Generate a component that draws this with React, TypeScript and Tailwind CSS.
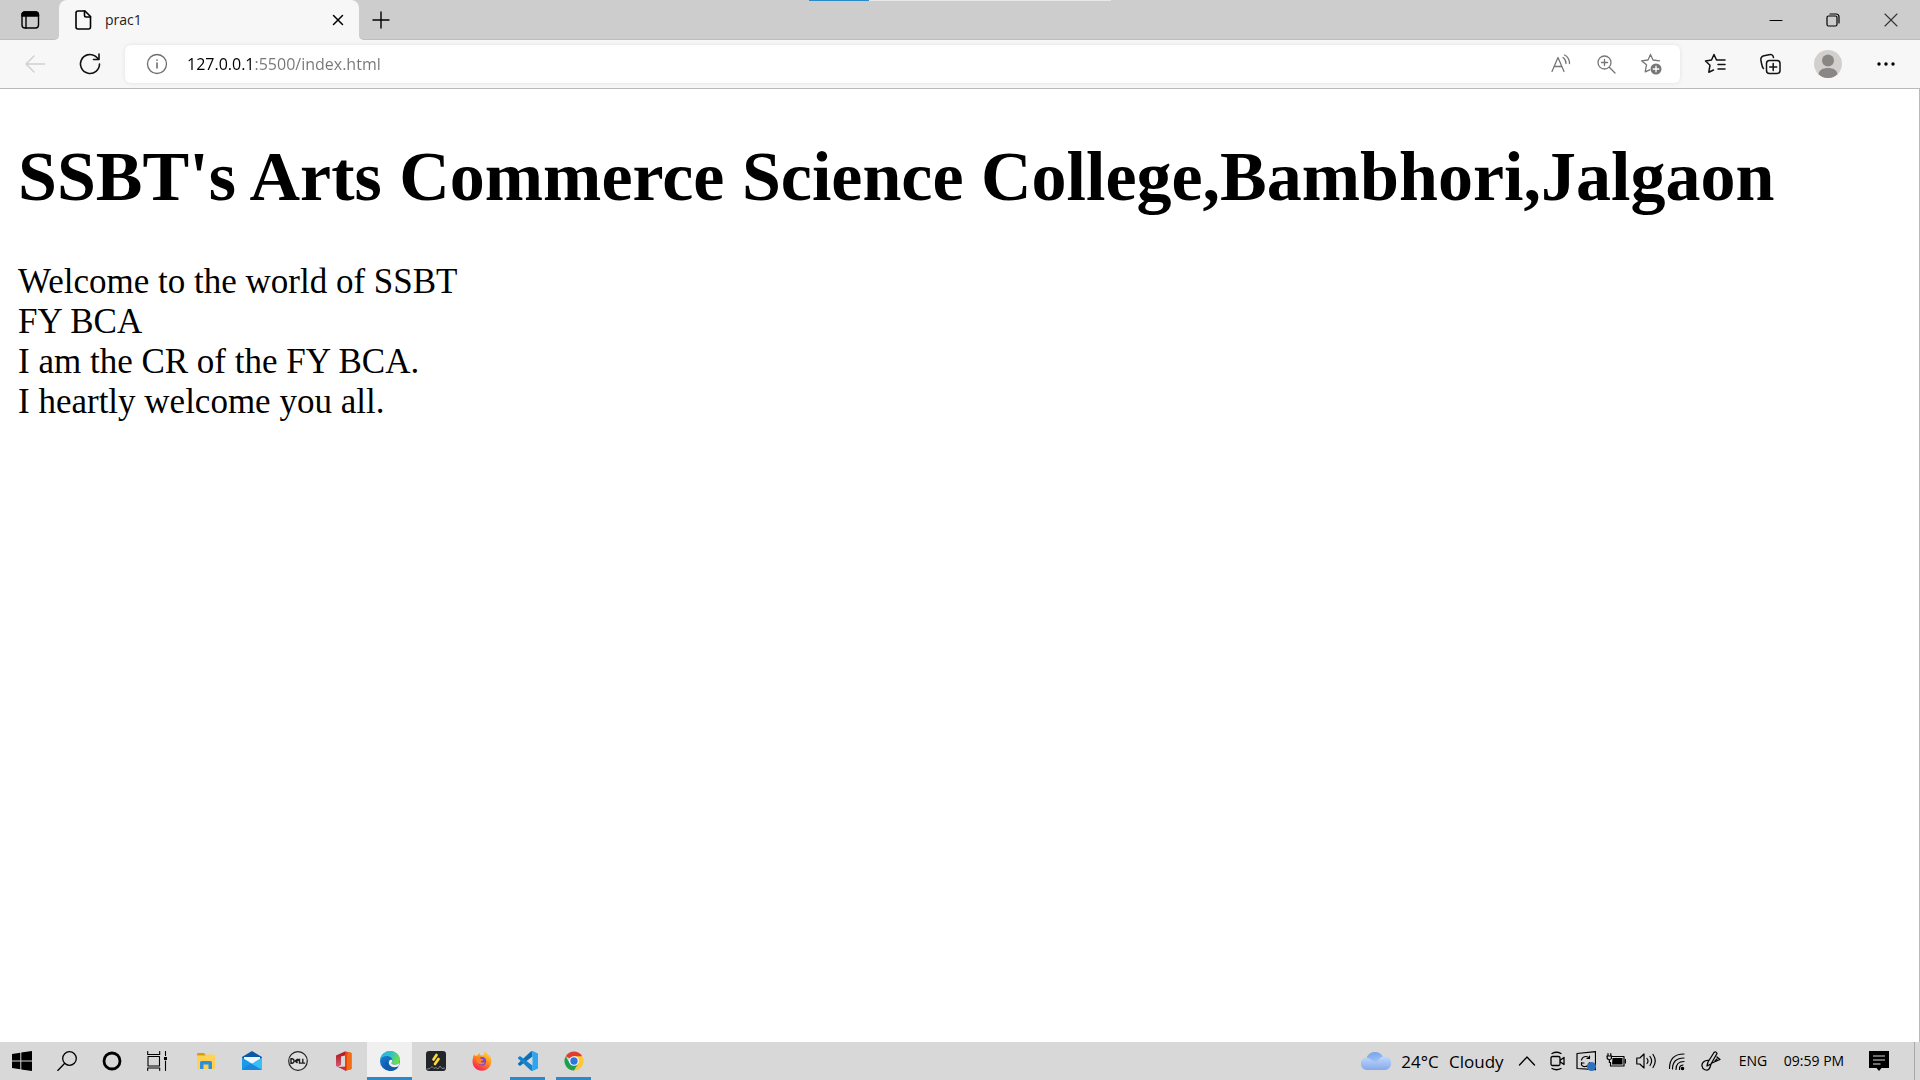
import React from "react";

type BoxProps = { label: string; className: string; children: React.ReactNode };

function IconButton({ label, className, children }: BoxProps) {
  return (
    <button type="button" aria-label={label} className={`flex shrink-0 items-center justify-center ${className}`}>
      {children}
    </button>
  );
}

type GlyphProps = { size?: number; children: React.ReactNode; className?: string; stroke?: number };

function Line({ size = 20, children, className = "", stroke = 1.3 }: GlyphProps) {
  return (
    <svg
      width={size}
      height={size}
      viewBox={`0 0 ${size} ${size}`}
      fill="none"
      stroke="currentColor"
      strokeWidth={stroke}
      strokeLinecap="round"
      strokeLinejoin="round"
      className={`shrink-0 ${className}`}
      aria-hidden="true"
    >
      {children}
    </svg>
  );
}

function TitleBar() {
  return (
    <header className="relative flex h-10 shrink-0 bg-[#f7f7f7]">
      <div className="flex w-[59px] rounded-br-[5px] border-b border-[#bebebe] bg-[#cdcdcd]">
        <IconButton label="Tab actions" className="w-full">
          <Line stroke={1.4}>
            <rect x="2" y="2" width="16.5" height="16" rx="3" />
            <path d="M2 6V5a3 3 0 0 1 3-3h10.500a3 3 0 0 1 3 3v1z" fill="currentColor" />
            <path d="M6 6v12" />
          </Line>
        </IconButton>
      </div>
      <div className="w-[300px] bg-[linear-gradient(#cdcdcd_20px,#f7f7f7_20px)]">
        <div className="flex h-full items-center rounded-t-lg bg-[#f7f7f7] pl-[14px] pr-[10px]">
          <Line stroke={1.6}>
            <path d="M5 1h7l5.500 5.500V17a2 2 0 0 1-2 2H5a2 2 0 0 1-2-2V3a2 2 0 0 1 2-2z" />
            <path d="M11.500 1v4.500a1.500 1.500 0 0 0 1.500 1.500h4.500" />
          </Line>
          <span className="grow pl-3 text-sm text-[#1b1b1b]">prac1</span>
          <IconButton label="Close tab" className="size-[22px]">
            <Line size={12} stroke={1.5}>
              <path d="M1.500 1.500l9 9M10.500 1.500l-9 9" />
            </Line>
          </IconButton>
        </div>
      </div>
      <div className="flex grow items-center rounded-bl-[5px] border-b border-[#bebebe] bg-[#cdcdcd]">
        <IconButton label="New tab" className="h-full w-11">
          <Line size={18} stroke={1.4}>
            <path d="M9 1v16M1 9h16" />
          </Line>
        </IconButton>
        <div className="grow" />
        <IconButton label="Minimize" className="h-full w-[57px]">
          <Line size={14} stroke={1}>
            <path d="M1 7.500h12" />
          </Line>
        </IconButton>
        <IconButton label="Restore" className="h-full w-[57px]">
          <Line size={14} stroke={1.2}>
            <rect x="1" y="3" width="10" height="10" rx="1.500" />
            <path d="M4 1h6a3 3 0 0 1 3 3v6" />
          </Line>
        </IconButton>
        <IconButton label="Close" className="h-full w-[59px] text-[#333]">
          <Line size={14} stroke={1.1}>
            <path d="M1 1l12 12M13 1L1 13" />
          </Line>
        </IconButton>
      </div>
      <div className="absolute left-1/2 top-0 flex h-px w-[302px] -translate-x-1/2 bg-[#e8e8e8]">
        <div className="w-[60px] bg-[#2d8ac9]" />
      </div>
    </header>
  );
}

function Toolbar() {
  return (
    <nav className="flex h-[49px] shrink-0 items-center border-b border-[#b9b9b9] bg-[#f7f7f7]">
      <IconButton label="Back" className="ml-3 h-full w-[46px] text-[#cfcfcf]">
        <Line size={22} stroke={1.4}>
          <path d="M20.500 11H2M10 3L2 11l8 8" />
        </Line>
      </IconButton>
      <IconButton label="Refresh" className="ml-2 h-full w-[48px] text-[#111]">
        <Line size={22} stroke={1.6}>
          <path d="M20.500 11a9.500 9.500 0 1 1-4.200-7.900l2.700 2.400M20 1v5.500h-5.500" />
        </Line>
      </IconButton>
      <div className="ml-[11px] flex h-[38px] grow items-center rounded-md bg-white shadow-[0_0_5px_rgba(0,0,0,0.09)]">
        <IconButton label="View site information" className="ml-5 size-6 text-[#6d6d6d]">
          <Line size={22}>
            <circle cx="11" cy="11" r="9.500" />
            <path d="M11 10v5M11 7v.2" stroke="currentColor" strokeWidth="1.600" />
          </Line>
        </IconButton>
        <input
          aria-label="Address"
          defaultValue="127.0.0.1:5500/index.html"
          spellCheck={false}
          className="ml-[18px] h-8 min-w-0 grow bg-[linear-gradient(to_right,#000_68px,#767676_68px)] bg-clip-text text-base text-transparent outline-none"
        />
        <div className="flex text-[#767676]">
          <IconButton label="Read aloud" className="h-8 w-[45px]">
            <Line size={20}>
              <path d="M1 17.500L7 3.500l6 14M3 12.500h8M12 3.500q3 2 3 6M13.500 1q5 2.500 5 8.500" />
            </Line>
          </IconButton>
          <IconButton label="Zoom" className="h-8 w-[45px]">
            <Line size={20}>
              <circle cx="8.500" cy="8.500" r="6.500" />
              <path d="M13.300 13.300L19 19M8.500 5.500v6M5.500 8.500h6" />
            </Line>
          </IconButton>
          <IconButton label="Add to favorites" className="h-8 w-[46px]">
            <Line size={22}>
              <path d="M10.500 1.500l2.500 5.500 6.500.8M10.500 1.500L8 7l-6.500.8 5 4-1.300 7 4.500-2" />
              <circle cx="16" cy="16" r="5.500" fill="currentColor" stroke="none" />
              <path d="M16 13.200v5.600M13.200 16h5.600" stroke="white" />
            </Line>
          </IconButton>
        </div>
        <div className="w-[6px]" />
      </div>
      <div className="flex items-center pl-2 text-[#111]">
        <IconButton label="Favorites" className="h-10 w-[54px]">
          <Line size={22} stroke={1.5}>
            <path d="M13.500 7H12.500L10 1.500 7.500 7 1.500 8l4.500 4.200-1.200 7L9.500 17M13.500 7H21M14 11.500h7M14 16h7" />
          </Line>
        </IconButton>
        <IconButton label="Collections" className="h-10 w-[56px]">
          <Line size={22} stroke={1.5}>
            <rect x="7.500" y="7.500" width="13.500" height="13" rx="3" />
            <path d="M14.200 10.500v7M10.700 14h7M4.500 15.500C3 14.500 3 12 2 8c-.7-3 .3-4.500 3-5.200l5-1.100c3-.6 4 .3 4.500 2.800" />
          </Line>
        </IconButton>
        <IconButton label="Profile" className="h-10 w-[60px]">
          <svg width="28" height="28" viewBox="0 0 28 28" aria-hidden="true">
            <circle cx="14" cy="14" r="14" fill="#d2d0ce" />
            <circle cx="14" cy="10.500" r="6" fill="#8a8684" />
            <path d="M4.500 24.300C5 20 8.800 18 14 18s9 2 9.500 6.300A14 14 0 0 1 4.500 24.300z" fill="#8a8684" />
          </svg>
        </IconButton>
        <IconButton label="Settings and more" className="mr-[7px] h-10 w-[55px]">
          <svg width="18" height="4" viewBox="0 0 18 4" aria-hidden="true">
            <circle cx="2" cy="2" r="1.700" />
            <circle cx="9" cy="2" r="1.700" />
            <circle cx="16" cy="2" r="1.700" />
          </svg>
        </IconButton>
      </div>
    </nav>
  );
}

function Page() {
  return (
    <main className="grow border-r border-[#b9b9b9] bg-white px-[18px] pt-12 font-['Liberation_Serif',serif] text-black">
      <h1 className="text-[70px] font-bold leading-[80px]">SSBT's Arts Commerce Science College,Bambhori,Jalgaon</h1>
      <p className="mt-[45px] text-[35px] leading-10">
        Welcome to the world of SSBT
        <br />
        FY BCA
        <br />
        I am the CR of the FY BCA.
        <br />
        I heartly welcome you all.
      </p>
    </main>
  );
}

function Logo({ children }: { children: React.ReactNode }) {
  return (
    <svg width="20" height="20" viewBox="0 0 20 20" aria-hidden="true">
      {children}
    </svg>
  );
}

const apps: { name: string; state?: "active" | "open"; art: React.ReactNode }[] = [
  {
    name: "File Explorer",
    art: (
      <Logo>
        <path d="M1 3q0-1 1-1h6l2 2.500H1z" fill="#d99a0b" />
        <path d="M1 5h8l1.500-1.500H18q1 0 1 1V17q0 1-1 1H2q-1 0-1-1z" fill="#ffd256" />
        <path d="M4 18v-6.500q0-1.500 1.500-1.500h9q1.500 0 1.500 1.500V18h-3.500v-4.500h-5V18z" fill="#2f8fdd" />
      </Logo>
    ),
  },
  {
    name: "Mail",
    art: (
      <Logo>
        <path d="M0 6l10-6 10 6v5H0z" fill="#0b57a8" />
        <path d="M2 6h16v4l-8 5-8-5z" fill="#eef7fd" />
        <path d="M0 6.500L20 19H1q-1 0-1-1z" fill="#1a9be8" />
        <path d="M20 6.500V18q0 1-1 1L8.500 13.500z" fill="#39bdf5" />
        <path d="M0 18L9 12.500 20 19H1q-1 0-1-1z" fill="#1688de" />
      </Logo>
    ),
  },
  {
    name: "Dell",
    art: (
      <Logo>
        <circle cx="10" cy="10" r="9.300" fill="#dedede" stroke="#222" strokeWidth="1.200" />
        <path
          d="M3 7.800v4.400h1.300q1.800-.3 1.800-2.200T4.300 7.800zM9.500 12l-2.300-2 2.500-2M8 11l2.700-2.200M8.200 10L10.500 8M11.500 7.800v4.300H14M14.800 7.800v4.300h2.400"
          fill="none"
          stroke="#1c1c1c"
          strokeWidth="1.400"
        />
      </Logo>
    ),
  },
  {
    name: "Office",
    art: (
      <Logo>
        <defs>
          <linearGradient id="office" x1="0" y1="0" x2="0" y2="1">
            <stop offset="0" stopColor="#a81515" />
            <stop offset="1" stopColor="#d85a78" />
          </linearGradient>
        </defs>
        <path d="M2 4.500L11 .5v4L7 5.500V14l-3 2-2-1z" fill="url(#office)" />
        <path d="M11 .2L17.500 2v16L11 20z" fill="#e8480b" />
        <path d="M14 1l3.500 1v16L13 19.300V4z" fill="#f36b13" />
        <path d="M4 16l8-.5V20z" fill="#c52f42" />
      </Logo>
    ),
  },
  {
    name: "Microsoft Edge",
    state: "active",
    art: (
      <Logo>
        <defs>
          <linearGradient id="edgeTop" x1="0" y1="0" x2="1" y2="0.400">
            <stop offset="0" stopColor="#2cb1e4" />
            <stop offset="0.500" stopColor="#2ebfca" />
            <stop offset="1" stopColor="#6bdc52" />
          </linearGradient>
          <linearGradient id="edgeLow" x1="0" y1="0" x2="0.500" y2="1">
            <stop offset="0" stopColor="#1a8cdb" />
            <stop offset="1" stopColor="#0c4fa8" />
          </linearGradient>
        </defs>
        <circle cx="10" cy="10" r="10" fill="url(#edgeLow)" />
        <path d="M0 9C.8 3.500 5 0 10 0c6 0 10 4.500 10 8.700 0 3-2.200 5-5 5-2 0-3.600-.8-3.600-1.500 0-.5 1-1 1-2.700C12.400 6.500 9.500 5 7 5 3.500 5 1 7 0 9z" fill="url(#edgeTop)" />
        <path d="M7.500 8.500c-1.500 4 1.500 8.500 6 8.500 2.200 0 4-.8 5.300-1.800-1.500 3-4.800 4.800-8.300 4.800C5.500 19.500 3 12 7.500 8.500z" fill="#115ba8" />
        <path d="M11.400 12.200c0 .7 1.600 1.500 3.600 1.500 2 0 3.800-1 4.600-2.700-.1 1.700-.5 3-1.200 4.200-3.800 2-8.400 1-9.400-2.500-.5-1.800.2-3.400 1.500-3.900 1.500-.2 2 .5 1.900 1.500-.1 1-1 1.300-1 1.900z" fill="#f0f0f0" />
      </Logo>
    ),
  },
  {
    name: "Power Manager",
    art: (
      <Logo>
        <rect width="20" height="20" rx="3" fill="#22262b" />
        <path d="M10.500 4L7.500 8.500M12.500 8L9 13" stroke="#ffd93b" strokeWidth="2.700" strokeLinecap="round" />
        <path d="M1 18l3-.5 2-2 2 2 2-1 2 1.500 2-3 2 2.500 3-.5" fill="none" stroke="#8d8f91" strokeWidth="0.900" />
      </Logo>
    ),
  },
  {
    name: "Firefox",
    art: (
      <Logo>
        <defs>
          <linearGradient id="fox" x1="0.800" y1="0" x2="0.200" y2="1">
            <stop offset="0" stopColor="#ffe23b" />
            <stop offset="0.450" stopColor="#ff8a1e" />
            <stop offset="1" stopColor="#f2175e" />
          </linearGradient>
        </defs>
        <path d="M1 7c0-2 .8-3 1.500-3.800 0 1 .2 1.500.6 1.800.6-.5 1.400-.7 2.400-.6C6 3 7 2 8 2.200 7.500 3 8 4 9 4.500L12 4c-.2-1.700.2-3 1.500-4 .3 2 2 2.800 3 4 .6.500.7 0 .6-.5C18.500 5 19.500 8 19.300 11c-.4 5-4.500 8.800-9.400 8.800C4.500 19.800.5 15.600.5 10.500.5 9 .7 8 1 7z" fill="url(#fox)" />
        <circle cx="10" cy="10.300" r="4.200" fill="#7a46d8" />
        <path d="M4 7c2-1 4-.8 5.500 1 1 0 2 .1 2 .8-.4 1-2 .8-2.500 1.700.3 1.500 2.500 1.300 4 .6-1 3.400-6.500 3.200-7.800-.3C4.700 9.500 5 8 4 7z" fill="#ff8420" />
      </Logo>
    ),
  },
  {
    name: "Visual Studio Code",
    state: "open",
    art: (
      <Logo>
        <path d="M14.500 0v5.500L2 15 0 13.500v-1L12.800.6z" fill="#0f6fb4" />
        <path d="M14.500 20v-5.500L2 5 0 6.500v1l12.800 11.900z" fill="#1583c9" />
        <path d="M14.500 0L20 2.500v15L14.500 20q-1 0-1.700-.8l1.700-1V2L12.800.8Q13.500 0 14.500 0z" fill="#2aa6f2" />
      </Logo>
    ),
  },
  {
    name: "Google Chrome",
    state: "open",
    art: (
      <Logo>
        <path d="M10 10L1.800 5.200A9.500 9.500 0 0 1 18.200 5.200z" fill="#e33b2e" />
        <path d="M10 10V5.200h8.200A9.500 9.500 0 0 1 10 19.500l4.200-7.100z" fill="#fcc934" />
        <path d="M10 10l4.200 2.400L10 19.500A9.500 9.500 0 0 1 1.800 5.200L5.800 12.400z" fill="#1f9e50" />
        <circle cx="10" cy="10" r="4.800" fill="white" />
        <circle cx="10" cy="10" r="3.700" fill="#2a75e8" />
      </Logo>
    ),
  },
];

function Launcher() {
  return (
    <div className="flex h-full">
      <IconButton label="Start" className="w-11">
        <Logo>
          <path d="M0 3l8.300-1.200v7.700H0zM9.300 1.600L20 0v9.500H9.300zM0 10.500h8.300v7.700L0 17zM9.300 10.500H20V20L9.300 18.400z" />
        </Logo>
      </IconButton>
      <IconButton label="Search" className="w-[45px]">
        <Line size={20}>
          <circle cx="12.500" cy="7.500" r="6.800" />
          <path d="M7.500 12.500L.8 19.500" />
        </Line>
      </IconButton>
      <IconButton label="Cortana" className="w-[45px]">
        <Line size={20} stroke={2.8}>
          <circle cx="10" cy="10" r="8" />
        </Line>
      </IconButton>
      <IconButton label="Task view" className="w-[45px]">
        <Line size={20} stroke={1.1}>
          <rect x="1" y="5.500" width="11.500" height="9.500" />
          <path d="M.7.500v3h12v-3M.7 19.500v-2.500h12v2.500M18.500.5v4M18.500 10v9.500" />
          <rect x="17.500" y="6.500" width="2" height="2" fill="currentColor" />
        </Line>
      </IconButton>
      <div className="ml-1 flex gap-px">
        {apps.map((app) => (
          <button
            key={app.name}
            type="button"
            aria-label={app.name}
            className={`flex w-[45px] flex-col items-center justify-between pt-[9px] ${app.state === "active" ? "bg-[#f0f0f0]" : ""}`}
          >
            {app.art}
            {app.state && <span className={`h-[3px] bg-[#2d8ac9] ${app.state === "active" ? "w-full" : "w-[35px]"}`} />}
          </button>
        ))}
      </div>
    </div>
  );
}

function Tray() {
  return (
    <div className="flex h-full items-center">
      <button type="button" className="flex h-full items-center text-[17px]">
        <svg width="30" height="20" viewBox="0 0 30 20" aria-hidden="true">
          <defs>
            <linearGradient id="cloud" x1="0" y1="0" x2="0.300" y2="1">
              <stop offset="0" stopColor="#6d9fe8" />
              <stop offset="1" stopColor="#bcd4fb" />
            </linearGradient>
            <linearGradient id="puff" x1="0" y1="0" x2="0" y2="1">
              <stop offset="0" stopColor="#c3d8fc" />
              <stop offset="1" stopColor="#83a9ec" />
            </linearGradient>
          </defs>
          <path d="M6 19a6 6 0 0 1-.5-12A9 9 0 0 1 22 6a6.500 6.500 0 0 1 2 13z" fill="url(#cloud)" />
          <path d="M6 19a6 6 0 1 1 4.500-10Q14 12 17 10a6.800 6.800 0 1 1 7 9z" fill="url(#puff)" />
        </svg>
        <span className="w-12 pl-[10px] pt-0.5">24°C</span>
        <span className="w-[71px] pl-[10px] pt-0.5 text-left">Cloudy</span>
      </button>
      <IconButton label="Show hidden icons" className="h-full w-[34px]">
        <Line size={18}>
          <path d="M1.500 13L9 5l7.500 8" />
        </Line>
      </IconButton>
      <IconButton label="Meet Now" className="h-full w-[27px]">
        <Line size={20}>
          <rect x="3" y="5.500" width="9" height="9" rx="1.500" />
          <path d="M12.500 9l3.500-2.500v7L12.500 11M4 2.500q4.500-2.500 9 0M4 17.500q4.500 2.500 9 0" />
        </Line>
      </IconButton>
      <IconButton label="Windows Update" className="h-full w-[30px]">
        <Line size={20} stroke={1.2}>
          <path d="M1 2.500L19.500.6v18L1 17.500zM5.500 9q1-3.500 4.500-3.500 2 0 3.500 2V5M13.500 7.500H11M5.500 11.500V14q1.500 2 4 1.500 3 0 4-4M5.500 12H8" />
          <circle cx="15.500" cy="15.500" r="4.500" fill="#2d72bd" stroke="none" />
        </Line>
      </IconButton>
      <IconButton label="Battery" className="h-full w-[30px]">
        <Line size={20} stroke={1.2}>
          <path d="M6.500 5.500H18v9.500H4.500v-3.500M19.500 8.500v3.500M.8 5h5M2 2.500V5M4.800 2.500V5M1.200 5v2.500q2.200 2.500 4.200 0V5M3.400 9v2.500h1" />
          <path d="M6.500 7h10v6.500H6z" fill="currentColor" stroke="none" />
        </Line>
      </IconButton>
      <IconButton label="Volume" className="h-full w-[30px]">
        <Line size={20} stroke={1.2}>
          <path d="M.8 7h3L8 3v14l-4.200-4h-3zM11 7.500q2 2.500 0 5M14 5.500q3.200 4.500 0 9M17 3.500q4.500 6.500 0 13" />
        </Line>
      </IconButton>
      <IconButton label="Network" className="h-full w-[32px]">
        <Line size={20} stroke={1.2}>
          <path d="M2.500 17.500Q2.500 3 17 3M5.500 18Q5.500 7 17 7M9 18.500Q9 10.500 17 10.500M12.500 18.500Q12 14.500 16 14" />
          <circle cx="15.500" cy="17.500" r="1.200" fill="currentColor" />
        </Line>
      </IconButton>
      <IconButton label="Pen workspace" className="h-full w-[36px]">
        <Line size={20} stroke={1.3}>
          <path d="M6 15L7 11 13 1.500q2-1.500 3 1L10 13zM8 9.500C3 9 .5 12 1 15c.5 4 5 5 7 3s1-5 3-6l8-3.500-3-2.500M14 10l2-2" />
        </Line>
      </IconButton>
      <button type="button" className="h-full w-12 text-center text-sm">ENG</button>
      <button type="button" className="h-full w-[74px] text-center text-sm">09:59 PM</button>
      <IconButton label="Notifications" className="h-full w-[55px]">
        <svg width="20" height="20" viewBox="0 0 20 20" aria-hidden="true">
          <path d="M0 0h20v17h-7.500L10 20l-2.500-3H0z" />
          <path d="M4 5h12M4 9h12M4 13h7.500" stroke="#dadada" strokeWidth="1.200" />
        </svg>
      </IconButton>
      <button type="button" aria-label="Show desktop" className="ml-2 h-full w-[6px] border-l border-[#a8a8a8]" />
    </div>
  );
}

export default function App() {
  return (
    <div className="flex min-h-screen flex-col font-['Open_Sans','Noto_Sans',sans-serif] text-black">
      <TitleBar />
      <Toolbar />
      <Page />
      <footer className="flex h-[38px] shrink-0 justify-between bg-[#d8d8d8]">
        <Launcher />
        <Tray />
      </footer>
    </div>
  );
}
